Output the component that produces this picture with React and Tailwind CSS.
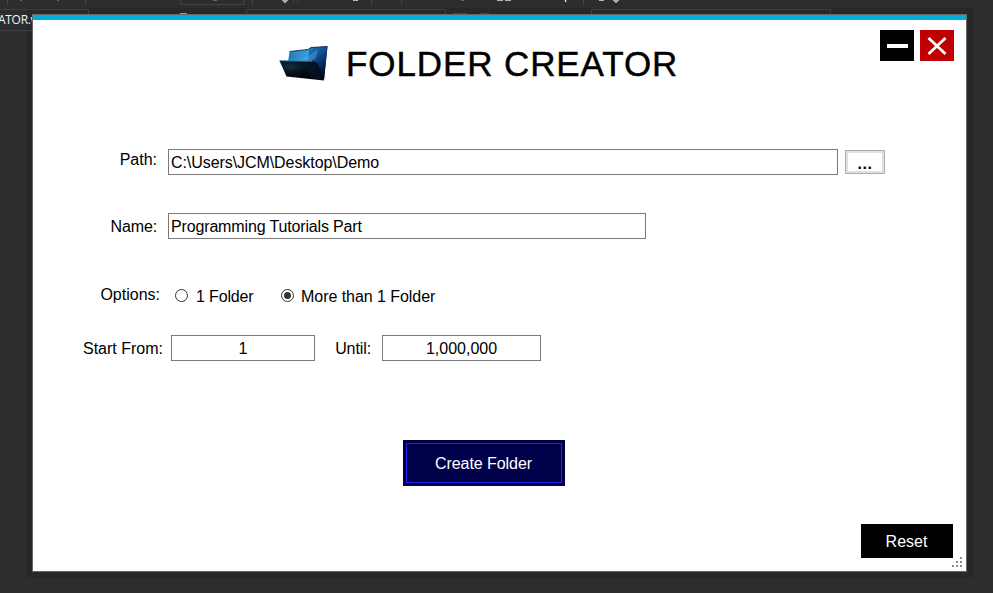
import React from "react";

function TextField({ value, className }) {
  return (
    <div className={`box-border h-[26px] shrink-0 whitespace-nowrap border border-[#7a7a7a] bg-white leading-[26px] ${className}`}>
      {value}
    </div>
  );
}

function Radio({ checked }) {
  return (
    <svg width="13" height="13" viewBox="0 0 13 13" className="block shrink-0">
      <circle cx="6.5" cy="6.5" r="6" fill="#fff" stroke="#333" />
      {checked && <circle cx="6.5" cy="6.5" r="3.5" fill="#333" />}
    </svg>
  );
}

function FolderIcon() {
  return (
    <svg width="50" height="36" viewBox="0 0 50 36" className="block shrink-0">
      <defs>
        <linearGradient id="back" x1="0" y1="0" x2="1" y2="0.3">
          <stop offset="0" stopColor="#2373ad" />
          <stop offset="0.5" stopColor="#3c9ddb" />
          <stop offset="0.75" stopColor="#134a92" />
          <stop offset="1" stopColor="#071c48" />
        </linearGradient>
        <linearGradient id="side" x1="0.2" y1="0" x2="0.7" y2="1">
          <stop offset="0" stopColor="#2575b5" />
          <stop offset="0.4" stopColor="#0f4488" />
          <stop offset="0.75" stopColor="#06194a" />
          <stop offset="1" stopColor="#020a24" />
        </linearGradient>
        <radialGradient id="front" cx="0.25" cy="0.3" r="0.7">
          <stop offset="0" stopColor="#14303f" />
          <stop offset="0.5" stopColor="#061018" />
          <stop offset="1" stopColor="#01040a" />
        </radialGradient>
      </defs>
      <path d="M9 16L10.500 5.500L29 3.500L32 1.500L48.500 0.500L45 34L38 30Z" fill="url(#back)" />
      <path d="M32 1.500L48.500 0.500L45 34L38 22L29 14Q31 8 30 3.500Z" fill="url(#side)" />
      <path d="M10.500 5.500L29 3.500L32 1.500L48.500 0.500" fill="none" stroke="#0b2c50" strokeWidth="0.9" />
      <path d="M16 15Q27 13 35 6L39 4L37 12L31 15.500Z" fill="#4db4ec" opacity="0.45" />
      <path d="M0.500 14.800L33 15.200L38 17L42 25L45 34.500L7.500 30.500Z" fill="url(#front)" />
      <path d="M0.500 14.800L33 15.200" fill="none" stroke="#2d7cac" strokeWidth="1" />
      <path d="M20 17Q29 22 32 32L44 34L41 24L37 17Z" fill="#102c46" opacity="0.3" />
    </svg>
  );
}

function EditorBackdrop() {
  return (
    <>
      <svg width="993" height="32" viewBox="0 0 993 32" className="block" shapeRendering="crispEdges">
        <path d="M7.500 0V4M85.500 0V4M252.500 0V4M371.500 0V4M401.500 0V4M583.500 0V4" stroke="#48484b" />
        <path d="M180.500 0V4.500H244.500V0" fill="none" stroke="#434346" />
        <path d="M0 9.500H88.500V31M0 30.500H32M246.500 14V9.500H445.500V14M591.500 14V9.500H830.500V14" fill="none" stroke="#3f3f42" />
        <path d="M282 0H288V1H287V2H286V3H284V2H283V1H282ZM613 0H619V1H618V2H617V3H615V2H614V1H613Z" fill="#aaaaaa" />
        <path d="M353 0H358V1H353ZM497 0H503V1H497ZM505 0H511V1H505ZM599 0H604V1H599Z" fill="#b8b8b8" />
        <path d="M213 0H217V1H213ZM20 0H22V1H20ZM57 0H59V1H57ZM461 0H464V1H461ZM293 1H294V2H293ZM297 1H298V2H297Z" fill="#67645e" />
        <path d="M180 13H187V14H180Z" fill="#999" />
        <path d="M453 13H467V14H453ZM480 13H489V14H480Z" fill="#48484b" />
        <path d="M565 0H566V2H565Z" fill="#f2f2f2" />
        <path d="M566 0H567V2H566Z" fill="#c04728" />
        <path d="M564 0H565V1H564Z" fill="#3555a8" />
      </svg>
      <div className="absolute left-[-2px] top-[12px] whitespace-nowrap font-['Open_Sans',sans-serif] text-[12px] leading-[16px] tracking-[-0.3px] text-[#f1f1f1]">ATOR.v</div>
    </>
  );
}

export default function App() {
  return (
    <div className="relative h-[593px] w-[993px] overflow-hidden bg-[#2d2d30] font-['Liberation_Sans',Arial,sans-serif] text-[16px] text-black">
      <div className="absolute left-[27px] top-[8px] h-[570px] w-[946px] bg-[#28282b]" />
      <div className="absolute inset-x-0 top-0">
        <EditorBackdrop />
      </div>

      <main className="absolute left-[32px] top-[14px] flex h-[558px] w-[935px] flex-col border border-[#666866] bg-white">
        <div className="h-[5px] shrink-0 bg-[#00aedb]" />

        <header className="flex h-[129px] shrink-0 items-start pl-[246px] pr-[12px] pt-[10px]">
          <div className="pt-4">
            <FolderIcon />
          </div>
          <h1 className="ml-[17px] mt-[14px] whitespace-nowrap text-[35px] leading-[40px] tracking-[0.9px] [-webkit-text-stroke:0.45px_#000]">FOLDER CREATOR</h1>
          <div className="ml-auto flex gap-[6px]">
            <button className="flex h-[31px] w-[34px] items-center justify-center bg-black">
              <span className="mt-px h-[4px] w-[21px] bg-white" />
            </button>
            <button className="flex h-[31px] w-[34px] items-center justify-center bg-[#c00000]">
              <svg width="20" height="18" viewBox="0 0 20 18">
                <path d="M1.500 1L18.500 17M18.500 1L1.500 17" stroke="#fff" strokeWidth="2.800" />
              </svg>
            </button>
          </div>
        </header>

        <section className="flex h-[64px] shrink-0">
          <div className="mt-[-2px] w-[124px] text-right leading-[26px]">Path:</div>
          <TextField className="ml-[11px] w-[670px] pl-[2px] tracking-[-0.07px]" value="C:\Users\JCM\Desktop\Demo" />
          <button className="ml-[7px] mt-px h-[24px] w-[40px] border border-[#adadad] bg-white pt-px text-center font-bold leading-[24px] tracking-[0.55px] shadow-[inset_0_0_0_2px_#e1e1e1]">
            ...
          </button>
        </section>

        <section className="flex h-[69px] shrink-0">
          <div className="w-[124px] text-right leading-[28px] tracking-[-0.15px]">Name:</div>
          <TextField className="ml-[11px] w-[478px] pl-[2px] tracking-[-0.15px]" value="Programming Tutorials Part" />
        </section>

        <section className="flex h-[53px] shrink-0 items-start leading-[26px]">
          <div className="w-[127px] text-right">Options:</div>
          <div className="ml-[15px] flex items-center pt-[2px]">
            <span className="mb-[3px]"><Radio /></span>
            <span className="ml-[8px] w-[85px] tracking-[-0.15px]">1 Folder</span>
            <span className="mb-[3px]"><Radio checked /></span>
            <span className="ml-[7px] tracking-[-0.05px]">More than 1 Folder</span>
          </div>
        </section>

        <section className="flex h-[105px] shrink-0 leading-[28px]">
          <div className="w-[130px] text-right">Start From:</div>
          <TextField className="ml-[8px] w-[144px] text-center" value="1" />
          <div className="w-[56px] text-right tracking-[-0.1px]">Until:</div>
          <TextField className="ml-[11px] w-[159px] text-center" value="1,000,000" />
        </section>

        <div className="flex h-[84px] shrink-0 pl-[370px]">
          <button className="h-[46px] w-[162px] bg-[#00004a] p-[3px] text-white">
            <span className="flex h-full items-center justify-center border border-[#2222e6] pr-px pt-[2px] tracking-[-0.05px]">Create Folder</span>
          </button>
        </div>

        <div className="flex shrink-0 justify-end pr-[13px]">
          <button className="h-[34px] w-[92px] bg-black pr-px pt-[2px] text-white">Reset</button>
        </div>
        <svg className="ml-auto mr-[4px] mt-[-1px] block shrink-0" width="10" height="10" viewBox="0 0 10 10" shapeRendering="crispEdges">
          <path d="M8 0h2v2h-2zM4 4h2v2h-2zM8 4h2v2h-2zM0 8h2v2h-2zM4 8h2v2h-2zM8 8h2v2h-2z" fill="#8a8a8a" />
        </svg>
      </main>
    </div>
  );
}
